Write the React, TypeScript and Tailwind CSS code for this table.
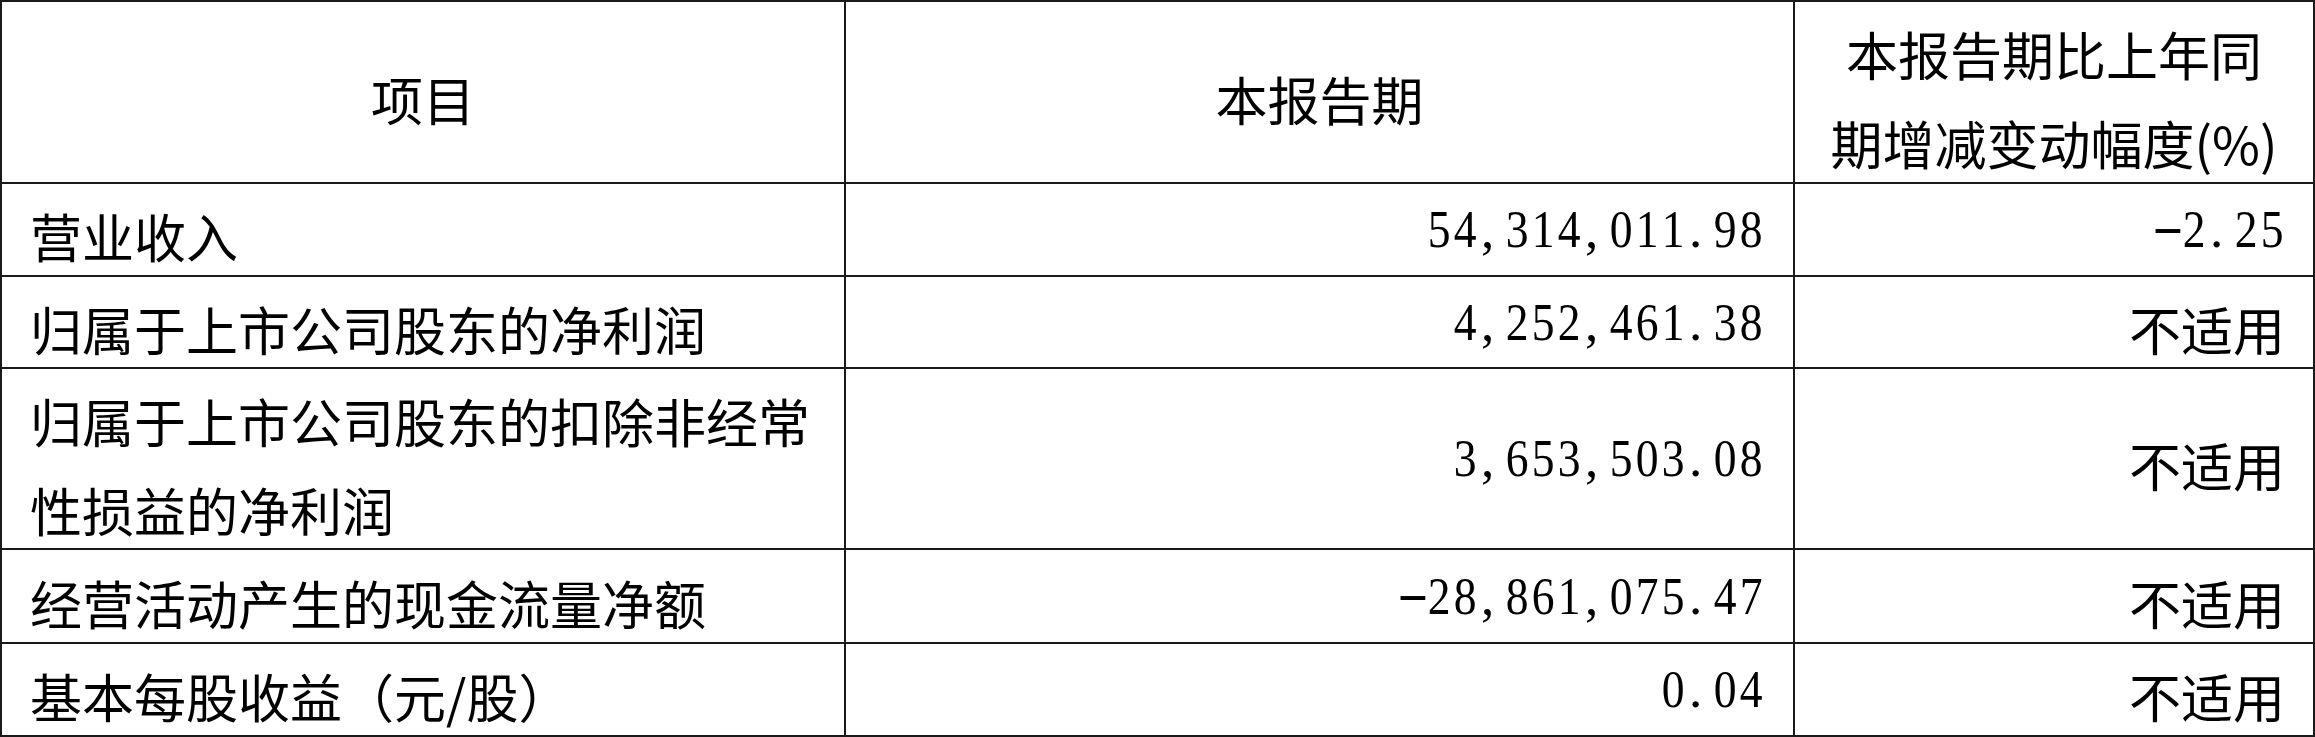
const cjk = "font-['Noto_Sans_CJK_SC',sans-serif]";

const rows = [
  { label: ['营业收入'], value: '54,314,011.98', change: '-2.25' },
  { label: ['归属于上市公司股东的净利润'], value: '4,252,461.38', change: '不适用' },
  { label: ['归属于上市公司股东的扣除非经常', '性损益的净利润'], value: '3,653,503.08', change: '不适用' },
  { label: ['经营活动产生的现金流量净额'], value: '-28,861,075.47', change: '不适用' },
  { label: ['基本每股收益（元/股）'], value: '0.04', change: '不适用' },
];

// half-width cells, like the report's SimSun digits
function Num({ text }: { text: string }) {
  return (
    <span className="flex font-['Liberation_Serif',serif] text-[53px] leading-[89px] text-black">
      {text.split('').map((ch, i) => (
        <span
          key={i}
          className={
            ch === ',' || ch === '.'
              ? 'inline-block w-[26px] text-left pl-[3px]'
              : ch === '-'
              ? 'inline-block w-[26px] text-center scale-x-[1.8] -translate-y-[3px]'
              : 'inline-block w-[26px] text-center scale-x-[0.86]'
          }
        >
          {ch}
        </span>
      ))}
    </span>
  );
}

export default function App() {
  return (
    <div className="w-[2315px] h-[737px] bg-white">
      <div className="grid grid-cols-[842px_947px_518px] grid-rows-[180px_91px_90px_179px_92px_91px] gap-[2px] p-[2px] bg-[#1a1a1a] w-[2315px] h-[737px]">
        <div className={`bg-white flex items-center justify-center pt-[12px] text-[52px] leading-[89px] text-black ${cjk}`}>
          项目
        </div>
        <div className={`bg-white flex items-center justify-center pt-[12px] text-[52px] leading-[89px] text-black ${cjk}`}>
          本报告期
        </div>
        <div className={`bg-white flex items-center justify-center pt-[12px] text-center text-[52px] leading-[89px] text-black ${cjk}`}>
          <div>
            本报告期比上年同
            <br />
            期增减变动幅度(%)
          </div>
        </div>

        {rows.map((row, i) => (
          <div key={i} className="contents">
            <div className={`bg-white flex items-center pl-[28px] pt-[12px] text-[52px] leading-[89px] text-black ${cjk}`}>
              <div>
                {row.label.map((line, j) => (
                  <div key={j}>{line}</div>
                ))}
              </div>
            </div>
            <div className="bg-white flex items-center justify-end pr-[29px]">
              <Num text={row.value} />
            </div>
            <div className="bg-white flex items-center justify-end pr-[28px]">
              {row.change === '不适用' ? (
                <span className={`pt-[12px] text-[52px] leading-[89px] text-black ${cjk}`}>不适用</span>
              ) : (
                <Num text={row.change} />
              )}
            </div>
          </div>
        ))}
      </div>
    </div>
  );
}
